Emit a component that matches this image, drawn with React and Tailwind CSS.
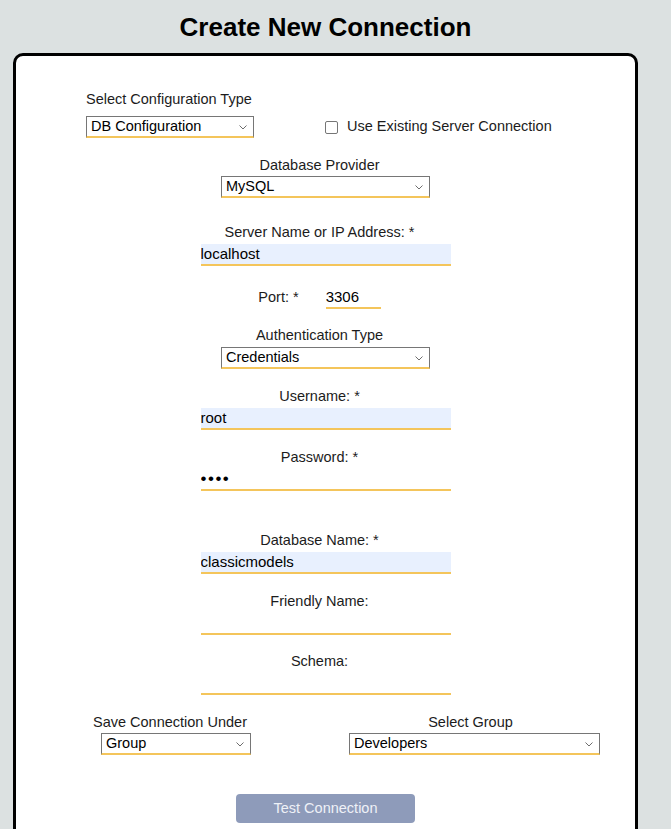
import { useState } from "react";

// dropdown with the thin chevron used on this form
function Dropdown({ value, className }) {
  return (
    <div className={`relative h-[22px] border border-[#767676] border-b-2 border-b-[#f4c55b] bg-white ${className}`}>
      <div className="pl-[4px] text-[14.5px] leading-[19px] text-black">{value}</div>
      <svg className="absolute right-[6px] top-[8px]" width="8" height="5" viewBox="0 0 8 5" fill="none">
        <path d="M0.5 0.5 L4 4 L7.5 0.5" stroke="#6d6d6d" strokeWidth="1" />
      </svg>
    </div>
  );
}

function Field({ value, filled, type = "text" }) {
  const pw = type === "password";
  return (
    <input
      type={type}
      readOnly
      value={value}
      className={`block w-[250px] h-[22px] border-b-2 border-[#f4c55b] text-black outline-none ${pw ? "text-[17px] tracking-[1.5px]" : "text-[15px]"} ${filled ? "bg-[#e8f0fe]" : "bg-white"}`}
    />
  );
}

function Label({ children, className = "" }) {
  return (
    <div className={`w-[250px] pr-[12px] text-center text-[14.5px] leading-[20px] text-[#1c1c1c] ${className}`}>
      {children}
    </div>
  );
}

export default function App() {
  const [useExisting] = useState(false);

  return (
    <div className="min-h-screen bg-[#dce1e1] font-['Liberation_Sans',Arial,sans-serif] overflow-hidden">
      <h1 className="pt-[14px] pr-[20px] text-center text-[26px] leading-[26px] font-bold text-black">
        Create New Connection
      </h1>

      <div className="mt-[13px] ml-[13px] w-[625px] border-[3px] border-black rounded-[10px] bg-white pb-[40px]">
        {/* Configuration type */}
        <div className="pl-[70px] pt-[33px]">
          <div className="text-[14.5px] leading-[20px] text-[#1c1c1c]">Select Configuration Type</div>
          <div className="mt-[7px] flex items-center">
            <Dropdown value="DB Configuration" className="w-[168px]" />
            <span className="ml-[71px] inline-block w-[13px] h-[13px] border border-[#767676] rounded-[2px] bg-white">
              {useExisting ? "✓" : null}
            </span>
            <span className="ml-[9px] text-[14.5px] text-[#1c1c1c]">Use Existing Server Connection</span>
          </div>
        </div>

        <div className="flex flex-col items-center">
          <Label className="mt-[17px]">Database Provider</Label>
          <Dropdown value="MySQL" className="mt-[1px] w-[209px]" />

          <Label className="mt-[24px]">Server Name or IP Address: *</Label>
          <div className="mt-[2px]">
            <Field value="localhost" filled />
          </div>

          <div className="mt-[21px] w-[250px] pr-[12px] flex items-center justify-center gap-[27px]">
            <span className="text-[14.5px] text-[#1c1c1c]">Port: *</span>
            <input
              readOnly
              value="3306"
              className="w-[55px] h-[22px] border-b-2 border-[#f4c55b] text-[15px] text-black outline-none bg-white"
            />
          </div>

          <Label className="mt-[16px]">Authentication Type</Label>
          <Dropdown value="Credentials" className="mt-[2px] w-[209px]" />

          <Label className="mt-[17px]">Username: *</Label>
          <div className="mt-[2px]">
            <Field value="root" filled />
          </div>

          <Label className="mt-[17px]">Password: *</Label>
          <div className="mt-[2px]">
            <Field value="1234" type="password" />
          </div>

          <Label className="mt-[39px]">Database Name: *</Label>
          <div className="mt-[2px]">
            <Field value="classicmodels" filled />
          </div>

          <Label className="mt-[17px]">Friendly Name:</Label>
          <div className="mt-[2px]">
            <Field value="" />
          </div>

          <Label className="mt-[16px]">Schema:</Label>
          <div className="mt-[2px]">
            <Field value="" />
          </div>
        </div>

        {/* Save location */}
        <div className="mt-[17px] flex">
          <div className="ml-[77px] w-[160px]">
            <div className="text-[14.5px] leading-[20px] text-[#1c1c1c]">Save Connection Under</div>
            <Dropdown value="Group" className="mt-[1px] ml-[8px] w-[150px]" />
          </div>
          <div className="ml-[96px] w-[251px]">
            <div className="pr-[8px] text-center text-[14.5px] leading-[20px] text-[#1c1c1c]">Select Group</div>
            <Dropdown value="Developers" className="mt-[1px] w-[251px]" />
          </div>
        </div>

        <div className="mt-[39px] flex justify-center">
          <button className="w-[179px] h-[29px] rounded-[4px] bg-[#8e9bba] text-[14.5px] text-[#eef1f7]">
            Test Connection
          </button>
        </div>
      </div>
    </div>
  );
}
